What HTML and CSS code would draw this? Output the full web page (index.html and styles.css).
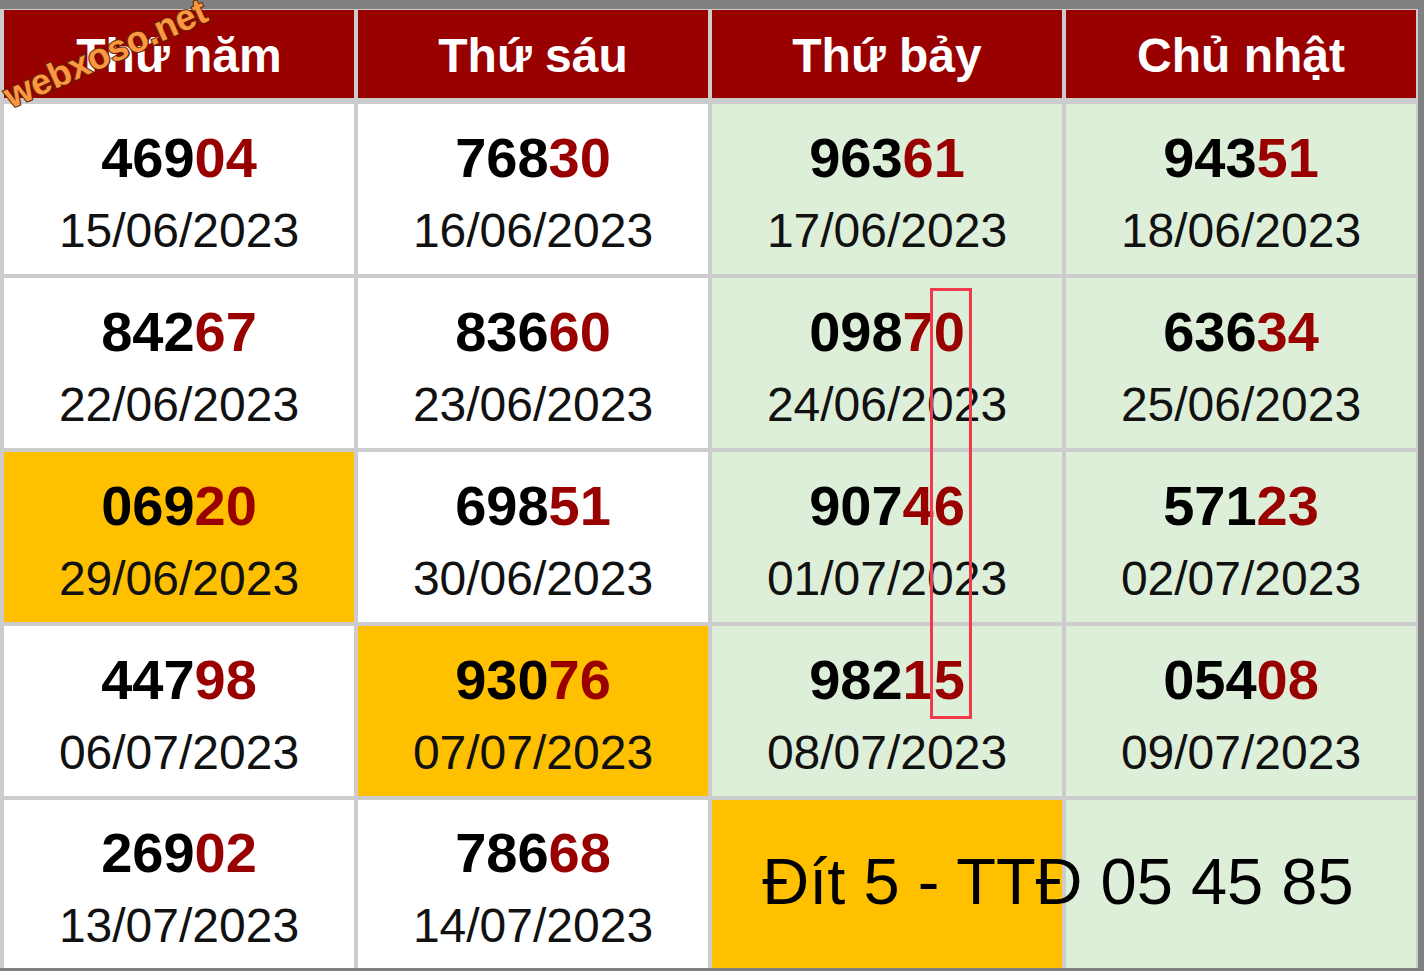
FILE: index.html
```html
<!DOCTYPE html>
<html lang="vi">
<head>
<meta charset="utf-8">
<title>Bảng kết quả</title>
<link rel="stylesheet" href="styles.css">
</head>
<body>
<div class="page">
  <div class="board">
    <div class="head">Thứ năm</div>
    <div class="head">Thứ sáu</div>
    <div class="head">Thứ bảy</div>
    <div class="head">Chủ nhật</div>

    <div class="cell"><div class="num">469<span class="hi">04</span></div><div class="date">15/06/2023</div></div>
    <div class="cell"><div class="num">768<span class="hi">30</span></div><div class="date">16/06/2023</div></div>
    <div class="cell green"><div class="num">963<span class="hi">61</span></div><div class="date">17/06/2023</div></div>
    <div class="cell green"><div class="num">943<span class="hi">51</span></div><div class="date">18/06/2023</div></div>

    <div class="cell"><div class="num">842<span class="hi">67</span></div><div class="date">22/06/2023</div></div>
    <div class="cell"><div class="num">836<span class="hi">60</span></div><div class="date">23/06/2023</div></div>
    <div class="cell green"><div class="num">098<span class="hi">70</span></div><div class="date">24/06/2023</div></div>
    <div class="cell green"><div class="num">636<span class="hi">34</span></div><div class="date">25/06/2023</div></div>

    <div class="cell amber"><div class="num">069<span class="hi">20</span></div><div class="date">29/06/2023</div></div>
    <div class="cell"><div class="num">698<span class="hi">51</span></div><div class="date">30/06/2023</div></div>
    <div class="cell green"><div class="num">907<span class="hi">46</span></div><div class="date">01/07/2023</div></div>
    <div class="cell green"><div class="num">571<span class="hi">23</span></div><div class="date">02/07/2023</div></div>

    <div class="cell"><div class="num">447<span class="hi">98</span></div><div class="date">06/07/2023</div></div>
    <div class="cell amber"><div class="num">930<span class="hi">76</span></div><div class="date">07/07/2023</div></div>
    <div class="cell green"><div class="num">982<span class="hi">15</span></div><div class="date">08/07/2023</div></div>
    <div class="cell green"><div class="num">054<span class="hi">08</span></div><div class="date">09/07/2023</div></div>

    <div class="cell"><div class="num">269<span class="hi">02</span></div><div class="date">13/07/2023</div></div>
    <div class="cell"><div class="num">786<span class="hi">68</span></div><div class="date">14/07/2023</div></div>
    <div class="pair">
      <div class="plain first amber"></div>
      <div class="plain second green"></div>
      <div class="note">Đít 5 - TTĐ 05 45 85</div>
    </div>
  </div>
  <div class="watermark">webxoso.net</div>
  <div class="marker"></div>
</div>
</body>
</html>
```

FILE: styles.css
```css
html, body {
  margin: 0;
  padding: 0;
  background: #808080;
}
body {
  width: 1424px;
  height: 971px;
  overflow: hidden;
  font-family: "Liberation Sans", Arial, sans-serif;
}
.page {
  position: relative;
  width: 1424px;
  height: 971px;
  padding-top: 9px;
  box-sizing: border-box;
}
.board {
  width: 1418px;
  box-sizing: border-box;
  padding: 1px 2px 0 4px;
  background: #cccccc;
  display: grid;
  grid-template-columns: repeat(4, 350px);
  grid-template-rows: 90px repeat(4, 170px) 168px;
  gap: 4px;
}
.head {
  background: #990000;
  border-bottom: 2px solid #cccccc;
  box-sizing: border-box;
  color: #ffffff;
  font-weight: bold;
  font-size: 48px;
  display: flex;
  align-items: center;
  justify-content: center;
  padding-top: 2px;
}
.cell {
  background: #ffffff;
  display: flex;
  flex-direction: column;
  align-items: center;
  justify-content: center;
  padding-top: 11px;
  box-sizing: border-box;
  color: #000000;
}
.green { background: #deefd9; }
.amber { background: #ffc000; }
.num {
  font-weight: bold;
  font-size: 56px;
  line-height: 72px;
}
.hi { color: #990000; }
.date {
  font-size: 48px;
  line-height: 74px;
  color: #111111;
}
.pair {
  grid-column: 3 / 5;
  display: grid;
  grid-template-columns: 350px 350px;
  grid-template-rows: 168px;
  gap: 4px;
}
.plain { grid-row: 1; }
.first { grid-column: 1; }
.second { grid-column: 2; }
.note {
  grid-row: 1;
  grid-column: 1 / 3;
  z-index: 1;
  display: flex;
  align-items: center;
  justify-content: center;
  font-size: 65px;
  color: #000000;
  padding-bottom: 6px;
  padding-right: 12px;
  white-space: nowrap;
}
.watermark {
  position: absolute;
  left: 14px;
  top: 76px;
  font-size: 36px;
  line-height: 40px;
  font-weight: bold;
  color: #ff9640;
  -webkit-text-stroke: 2px #5a2a08;
  paint-order: stroke fill;
  text-shadow: 1px 1px 0 #5a2a08;
  transform-origin: left bottom;
  transform: rotate(-24deg);
  white-space: nowrap;
}
.marker {
  position: absolute;
  left: 930px;
  top: 288px;
  width: 42px;
  height: 431px;
  box-sizing: border-box;
  border: 3px solid #f23a4c;
}
```
